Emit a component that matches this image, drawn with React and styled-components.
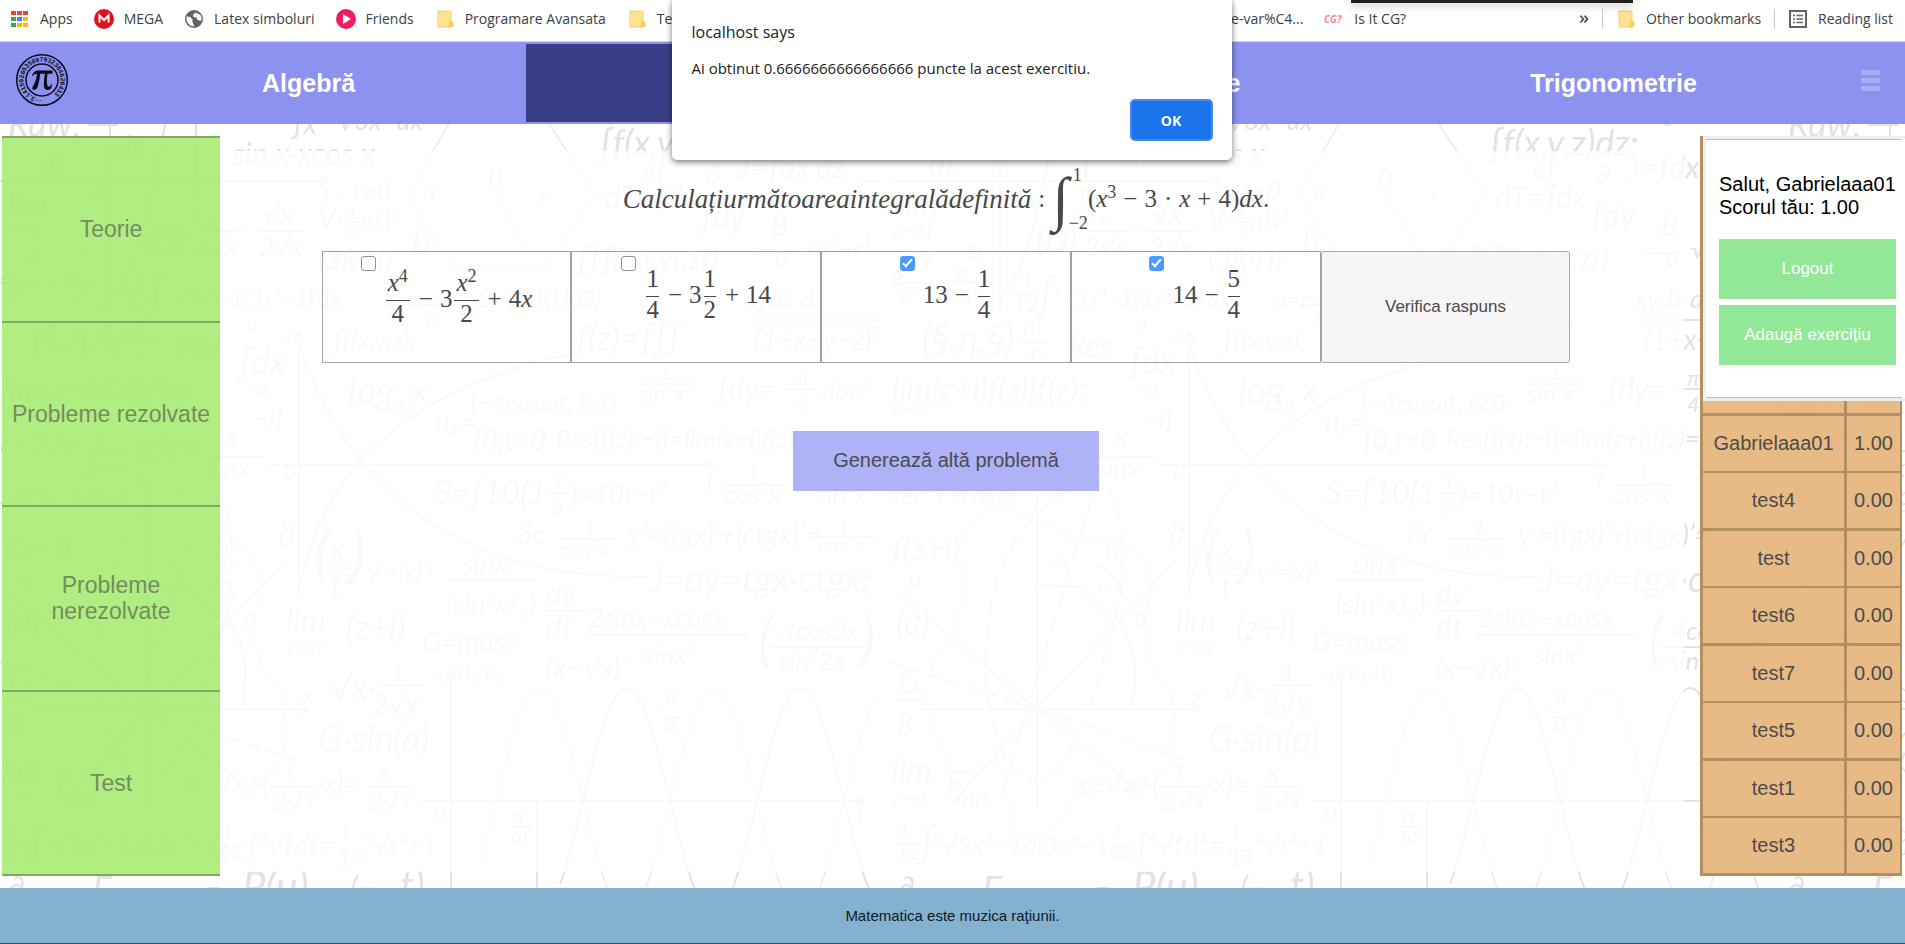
import React from 'react';
import styled, { createGlobalStyle } from 'styled-components';

const GlobalStyle = createGlobalStyle`
  *, *::before, *::after { box-sizing: border-box; }
  html, body { margin: 0; padding: 0; background: #fff; }
  body { font-family: "Liberation Sans", Arial, sans-serif; color: #000; }
  button { font-family: inherit; cursor: pointer; }
`;

const Page = styled.div`
  position: relative;
  display: flex;
  flex-direction: column;
  min-height: 100vh;
`;

/* ---------- bookmarks bar ---------- */

const BookmarkBar = styled.nav`
  display: flex;
  align-items: center;
  justify-content: space-between;
  height: 42px;
  padding: 0 12px 4px 10px;
  border-bottom: 1px solid #d9dadd;
  background: #fff;
  font-family: "Open Sans", "Noto Sans", sans-serif;
  font-size: 14px;
  line-height: 20px;
  white-space: nowrap;
`;

const BookmarkGroup = styled.div`
  display: flex;
  align-items: center;
  gap: ${(p) => p.$gap || 21}px;
`;

const Bookmark = styled.a`
  display: flex;
  align-items: center;
  gap: 10px;
  color: #3c4043;
  text-decoration: none;
  svg { display: block; width: 20px; height: 20px; }
`;

const Overflow = styled.button`
  width: 170px;
  padding: 0 0 4px;
  border: 0;
  background: none;
  color: #4d5156;
  font-family: "Open Sans", sans-serif;
  font-size: 18px;
  font-weight: 600;
  line-height: 20px;
  text-align: right;
`;

const Separator = styled.span`
  width: 1px;
  height: 20px;
  background: #c6c8cb;
`;

const TabStrip = styled.div`
  position: absolute;
  top: 0;
  right: 272px;
  width: 282px;
  height: 3px;
  background: #202124;
  box-shadow: 0 2px 8px rgba(0, 0, 0, 0.4);
`;

const FolderIcon = () => (
  <svg viewBox="0 0 20 20" aria-hidden="true">
    <path d="M3 2h13v11h2v4l-2 1H3z" fill="#fde293" stroke="#f3cf5e" />
    <path d="M14 18v-4q0-1 1-1h2v4q0 1-1 1z" fill="#fbd65b" stroke="#eec44a" strokeWidth=".7" />
  </svg>
);

const AppsIcon = () => (
  <svg viewBox="0 0 20 20" aria-hidden="true">
    {['#ea4335', '#ea4335', '#ea4335', '#34a853', '#4285f4', '#fbbc04', '#34a853', '#fbbc04', '#fbbc04'].map((c, i) => (
      <rect key={i} x={1 + (i % 3) * 6} y={2 + Math.floor(i / 3) * 6} width="5" height="4" fill={c} />
    ))}
  </svg>
);

const MegaIcon = () => (
  <svg viewBox="0 0 20 20" aria-hidden="true">
    <circle cx="10" cy="10" r="10" fill="#e01020" />
    <path d="M5.500 13.500v-7l4.500 4.500 4.500-4.500v7" fill="none" stroke="#fff" strokeWidth="2" />
  </svg>
);

const GlobeIcon = () => (
  <svg viewBox="0 0 20 20" aria-hidden="true">
    <circle cx="10" cy="10" r="9" fill="#5f6368" />
    <path d="M2.500 7.500l4 .5 2 2.500v2.500l2 4.500c-4 0-8-3.500-8-7.500zM12 3.500l-3 2 .5 2.500 3 .5 1 2.500 3.500 1c1-2 1-4-.5-6z" fill="#fff" />
  </svg>
);

const PlayIcon = () => (
  <svg viewBox="0 0 20 20" aria-hidden="true">
    <circle cx="10" cy="10" r="10" fill="#ee1c64" />
    <path d="M7 5l8 5-8 5z" fill="#fff" />
  </svg>
);

const CgIcon = () => (
  <svg viewBox="0 0 20 20" aria-hidden="true">
    <text x="0" y="14" fontFamily="Open Sans" fontSize="10" fontStyle="italic" fontWeight="700" fill="#ee8a90">CG?</text>
  </svg>
);

const ReadingIcon = () => (
  <svg viewBox="0 0 20 20" aria-hidden="true">
    <rect x="2" y="2" width="16" height="16" fill="none" stroke="#5f6368" strokeWidth="2" />
    <path d="M5 6.500h2M5 10h2M5 13.500h2M8.500 6.500h6.500M8.500 10h6.500M8.500 13.500h6.500" stroke="#5f6368" strokeWidth="1.600" />
  </svg>
);

/* ---------- site navigation ---------- */

const TopNav = styled.nav`
  display: grid;
  grid-template-columns: 91px repeat(4, 1fr) 74px;
  height: 82px;
  padding: 2px 0;
  background: #8c92f0;
`;

const LogoLink = styled.a`
  display: flex;
  align-items: center;
  padding: 0 0 6px 15px;
  svg { width: 54px; height: 54px; }
`;

const Topic = styled.a`
  display: flex;
  align-items: center;
  justify-content: center;
  background: ${(p) => (p.$active ? '#393d85' : 'transparent')};
  color: #fff;
  font-size: 25px;
  font-weight: 700;
  text-decoration: none;
`;

const MenuButton = styled.button`
  display: flex;
  flex-direction: column;
  justify-content: center;
  gap: 3px;
  padding: 0 0 6px 30px;
  border: 0;
  background: none;
`;

const MenuLine = styled.span`
  width: 19px;
  height: 5px;
  background: #a9adf4;
`;

const PiLogo = () => (
  <svg viewBox="0 0 54 54" role="img" aria-label="Pi">
    <defs>
      <path id="ring" d="M27 45.500a18.500 18.500 0 1 1 .1 0" />
    </defs>
    <circle cx="27" cy="27" r="25.300" fill="none" stroke="#0b0b18" strokeWidth="1.500" />
    <circle cx="27" cy="27" r="16" fill="none" stroke="#0b0b18" strokeWidth="1.500" />
    <text fontFamily="Liberation Sans" fontSize="6.500" fontWeight="700" fill="#0b0b18">
      <textPath href="#ring">···3.1415926535897932384626433</textPath>
    </text>
    <path d="M17 23q1.500-5.500 6-5.500h14.500v3.200h-5q-1 6-.5 10 .4 3 2 3 1.500 0 2-2.500h1q0 5.800-4.200 5.800-4 0-4-5.300 0-4 1-11h-4.600q-.6 8-2.500 13-1.500 3.600-3.700 3.300-2.500-.6-1.500-3 3.500-5 4.500-13.300-3-.2-4 2.300z" fill="#0b0b18" />
  </svg>
);

/* ---------- board with the formula wallpaper ---------- */

const Board = styled.div`
  position: relative;
  flex: 1;
  display: grid;
  grid-template-columns: 218px 1fr 205px;
  column-gap: 16px;
  padding: 12px 0 12px 2px;
`;

const WallpaperSvg = styled.svg`
  position: absolute;
  inset: 0;
  width: 100%;
  height: 100%;
  pointer-events: none;
  font-family: Lato, "DejaVu Sans", sans-serif;
  font-style: italic;
  fill: #e2e2e2;
`;

const notes = [
  [8, 137, 36, 'Raw;'], [38, 176, 32, 'dt'], [115, 159, 32, 'dt'], [292, 134, 28, '∫x'], [338, 130, 26, '√3x−ux'],
  [232, 165, 31, 'sin x·xcos x'], [598, 156, 36, '∫f(x,y,z)dz;'], [744, 126, 24, '→ s'],
  [8, 215, 32, 'lim'], [2, 238, 24, 'z→i'], [92, 202, 20, '0'], [190, 200, 20, 'π'], [190, 220, 20, 'w'],
  [12, 264, 20, '−3z'], [0, 287, 28, 'e'], [76, 260, 20, '3i'], [65, 281, 26, 'e'], [47, 288, 20, '='],
  [8, 304, 24, 'z²'], [62, 306, 24, '−i²₋₄'], [146, 252, 34, '(D)'], [207, 227, 24, 'x'], [194, 256, 26, '2√x'],
  [240, 236, 22, '−'], [262, 224, 28, '√x'], [259, 256, 26, '2√x'], [323, 204, 24, 't'], [340, 200, 26, ', t≥0'],
  [318, 229, 28, 'V·'], [347, 219, 16, '1'], [346, 238, 16, '3'], [360, 229, 24, 'πH³'], [318, 270, 28, '(3R·H)'],
  [130, 287, 22, '1'], [122, 312, 24, '12'], [147, 309, 42, '∫'], [163, 307, 23, '⁶√3x⁴−1(3x⁴−1)’dx'],
  [488, 187, 26, '0'], [540, 203, 24, 'r'], [423, 200, 24, 'a'], [412, 256, 34, 'b'],
  [643, 180, 26, 'в∫'], [706, 184, 26, '∂'], [738, 178, 30, 'J=∫dx dz'], [605, 208, 30, 'dT=∫dx'], [700, 228, 32, '∫dy'],
  [771, 236, 28, 'В'], [775, 266, 28, 'a'], [748, 256, 24, '−'],
  [800, 258, 26, '√a³−r¹'], [576, 270, 30, '∫∫∫f(xr,yr,zr)'], [384, 308, 24, 'a=π−2'], [425, 326, 24, 'π'],
  [478, 308, 26, 'S=2πRH(D)'], [745, 308, 26, 'xydz dx'], [577, 350, 34, 'f(z)=∫∫∫'], [754, 350, 28, '(1+x+y−z)²'],
  [332, 350, 26, '∫f(x,y,z);'], [32, 352, 38, '(§,η,§)'], [110, 350, 24, '='], [133, 335, 24, 'n!'],
  [140, 360, 22, 'r ,'], [179, 357, 30, 'Res'], [247, 330, 20, 'a'], [238, 374, 34, '∫dx'], [282, 346, 18, '4'],
  [2, 401, 32, 'lim(z+i)f(z)[f(z);'], [244, 396, 22, '−a'], [254, 428, 26, '−i]'], [2, 416, 20, 'z→i'],
  [348, 404, 38, 'log'], [394, 412, 22, 'a'], [412, 402, 32, 'x'], [435, 432, 28, 'u₂='], [470, 412, 25, '{−4cosωt, t≥0'],
  [474, 450, 28, '{0,t<0'], [556, 448, 26, 'Res[f(z);−i]=lim(z+i)f(z)='], [660, 380, 20, '1'], [638, 402, 24, 'sin²x'],
  [716, 400, 30, '∫dy='], [797, 386, 22, 'π'], [797, 412, 22, '4'], [822, 400, 26, 'abc²'],
  [0, 456, 28, 'c−2√x·'], [94, 447, 24, 'x'], [82, 477, 26, '2√x'], [136, 460, 32, '(z)y='], [225, 446, 26, 'x'],
  [207, 478, 26, 'sinx'], [283, 480, 22, '0'], [0, 505, 26, 'sec²x−cosec'], [133, 485, 22, 'y'],
  [435, 504, 32, 'S=∫10(1−'], [553, 490, 20, 'T'], [552, 514, 20, '5'], [570, 504, 27, ')=10t−t²'], [706, 490, 24, 't'],
  [747, 478, 22, '1'], [724, 504, 26, 'cos²x'], [838, 478, 22, '1'], [816, 504, 26, 'sin²x'],
  [2, 560, 33, 'f(z+i)'], [18, 588, 26, 'u'], [6, 634, 34, '(a)'], [277, 546, 32, 'ϑ'], [314, 575, 60, '('], [331, 560, 28, 'x'],
  [331, 598, 30, 't²'], [350, 575, 60, ')'], [368, 580, 24, 'y’=(x)’·'], [462, 574, 28, 'sinx'], [446, 614, 28, '(sin²x/₂)'],
  [518, 545, 28, 'δc'], [583, 535, 22, '1'], [558, 558, 24, 'cos²x'], [628, 545, 28, 'y’=(tgx)’+(ctgx)’='], [838, 533, 20, '1'],
  [818, 553, 22, 'cos²x'], [650, 592, 36, 'J=ay=tgx·ctgx;'], [546, 605, 30, 'dv'], [546, 638, 30, 'dt'],
  [588, 628, 27, '2sinx−xcosx'], [644, 664, 26, 'sinx²'], [546, 678, 28, '(x−√x)²'], [758, 660, 60, '('], [781, 640, 26, '4cos2x'],
  [779, 670, 26, 'sin²2x'], [860, 660, 60, ')'], [286, 632, 32, 'lim'], [286, 655, 22, 'z→i'], [346, 640, 34, '(z+i)'],
  [422, 652, 28, 'G=mass'], [433, 684, 20, '4'], [458, 680, 24, 'u₁,u₂'], [302, 704, 24, 'x'], [330, 700, 34, '√x·'],
  [391, 681, 24, '1'], [372, 715, 28, '2√x'], [318, 752, 36, 'G·sin(a)'], [8, 693, 34, 'G'], [8, 730, 34, 'g'],
  [244, 628, 22, 'θ'], [163, 566, 20, 'x₁'], [215, 560, 20, 'N°'], [205, 592, 18, 'x₂'], [186, 794, 28, 'x−√x+('],
  [283, 780, 22, '1'], [272, 810, 26, '2√x'], [316, 794, 28, '·x)='], [378, 780, 24, 'x'], [368, 810, 26, '2√x'],
  [2, 782, 32, 'lim'], [2, 805, 20, 'z→i'], [56, 796, 34, 'F'], [66, 806, 24, 'mp'], [8, 838, 20, '1'], [6, 860, 24, '12'],
  [28, 858, 42, '∫'], [42, 855, 26, '⁶√3x⁴−1d(3x⁴−1)'], [222, 838, 18, '1'], [220, 858, 20, '12'], [246, 855, 28, '∫⁶√tdt='],
  [340, 840, 20, '1'], [338, 866, 22, '14'], [364, 855, 26, '⁶√t³+1'], [434, 822, 22, '0'], [512, 824, 22, 'π'],
  [511, 844, 24, 'ω'], [856, 824, 28, 't'], [666, 703, 24, 'в'], [664, 731, 26, 'a'], [652, 715, 20, '−'],
  [8, 898, 30, '∂'], [92, 904, 38, 'Γ'], [205, 900, 28, '='], [242, 902, 42, 'P(u)'], [350, 900, 32, '(−'], [400, 900, 40, 't)'],
];

const fractionBars = [
  'M34 141h51', 'M88 125h30', 'M0 283h45', 'M62 282h38', 'M187 200h22', 'M195 231h43', 'M257 231h48', 'M346 222h14',
  'M122 294h22', 'M410 305h40', 'M757 253h32', 'M750 320h134', 'M129 342h30', 'M85 451h47', 'M207 457h58',
  'M636 384h62', 'M785 389h32', 'M724 485h60', 'M816 485h58', 'M548 493h24', 'M558 539h58', 'M818 537h58', 'M327 568h26',
  'M446 580h88', 'M545 611h44', 'M587 635h160', 'M770 647h96', 'M380 685h44', 'M8 700h22', 'M662 717h20', 'M268 787h46',
  'M368 787h44', 'M6 844h22', 'M338 850h22', 'M511 827h20', 'M220 848h18', 'M860 181h22',
];

const wave = (from, to, phase) => {
  let d = '';
  for (let x = from; x <= to; x += 4) {
    const y = 801 - 113 * Math.sin(((x - phase) * Math.PI) / 87);
    d += `${d ? 'L' : 'M'}${x} ${Math.round(y)}`;
  }
  return d;
};

const Wallpaper = () => (
  <WallpaperSvg aria-hidden="true">
    <defs>
      <pattern id="formulas" patternUnits="userSpaceOnUse" x="-8" y="-124" width="890" height="1030" viewBox="-8 0 890 1030">
        {notes.map(([x, y, size, text], i) => (
          <text key={i} x={x} y={y} fontSize={size}>{text}</text>
        ))}
        <g fill="none" stroke="#e2e2e2" strokeWidth="2">
          <path d={fractionBars.join('')} />
          <path d="M0 181h328M320 177l9 4-9 4M110 124v188M196 124v56M165 124Q140 270 112 296" />
          <path d="M449 124L408 194L454 269H546L595 194L549 124M494 190L530 255" opacity=".6" />
          <path d="M299 330v265M294 342l5-12 5 12M268 465h440M704 460l10 5-10 5" />
          <path d="M299 345Q380 580 650 577M301 580Q340 400 580 352" />
          <path d="M147 475v335M30 709h280M300 704l10 5-10 5M147 709L286 560M147 709L7 592M147 709L62 803M147 709L256 796M147 585l42 2 38 40" />
          <path d="M0 662L147 709L305 763" strokeDasharray="14 6" />
          <path d="M183 490Q92 530 96 680Q110 800 160 775Q190 760 230 600Q240 480 200 480M201 500L110 800" strokeDasharray="16 8" />
          <path d="M69 550Q80 500 130 512Q160 520 190 545Q250 520 262 590Q240 650 280 690Q300 770 250 790Q190 790 180 800Q160 850 120 830Q120 790 105 755Q80 785 60 765Q20 700 50 650Q80 620 69 550z" opacity=".6" />
          <path d="M224 615Q254 650 242 706M205 565Q225 570 235 600" />
          <path d="M451 668v240M446 682l5-12 5 12M420 801h444M856 796l9 5-9 5M537 801v110" />
          <path d={wave(480, 876, 496)} opacity=".6" />
          <path d={wave(560, 876, 583)} />
        </g>
      </pattern>
    </defs>
    <rect width="100%" height="100%" fill="url(#formulas)" />
  </WallpaperSvg>
);

/* ---------- left menu ---------- */

const SideMenu = styled.nav`
  position: relative;
  display: grid;
  grid-auto-rows: 1fr;
  border-bottom: 2px solid #80a861;
`;

const SideLink = styled.a`
  display: flex;
  align-items: center;
  justify-content: center;
  padding: 0 8px;
  border-top: 2px solid #80a861;
  background: rgba(168, 236, 115, 0.9);
  color: #738d5e;
  font-size: 23px;
  line-height: 26px;
  text-align: center;
  text-decoration: none;
`;

/* ---------- exercise ---------- */

const Exercise = styled.main`
  position: relative;
  display: flex;
  flex-direction: column;
  align-items: center;
  margin: 15px 0 4px -16px;
  padding: 14px 12px 0 0;
  background: rgba(255, 255, 255, 0.78);
  color: #484848;
`;

const Question = styled.h1`
  display: flex;
  align-items: center;
  height: 68px;
  margin: 0;
  font-family: "Liberation Serif", "Times New Roman", serif;
  font-size: 25px;
  font-weight: 400;
  line-height: 30px;
  white-space: nowrap;
`;

const Words = styled.i`
  font-size: 27px;
`;

const IntegralSign = styled.span`
  font-size: 60px;
  line-height: 60px;
`;

const Bounds = styled.span`
  display: flex;
  flex-direction: column;
  justify-content: space-between;
  height: 68px;
  font-size: 18px;
  line-height: 20px;
  span:first-child { padding-left: 4px; }
`;

const Expression = styled.span`
  sup { font-size: 18px; line-height: 0; }
`;

const Options = styled.form`
  display: grid;
  grid-template-columns: repeat(5, 1fr);
  width: 86%;
  height: 112px;
  margin-top: 18px;
`;

const Option = styled.label`
  display: flex;
  justify-content: center;
  align-items: flex-start;
  gap: 8px;
  padding-top: 4px;
  border: 1px solid #a3a3a3;
`;

const Check = styled.input`
  appearance: none;
  flex: none;
  display: block;
  width: 15px;
  height: 15px;
  margin: 0;
  border: 1px solid #919191;
  border-radius: 3px;
  background: #fff;
  &:checked {
    border-color: #4a9aff;
    background: #4a9aff;
  }
  &:checked::after {
    content: "";
    display: block;
    width: 5px;
    height: 10px;
    margin: 0 auto;
    border: solid #fff;
    border-width: 0 2px 2px 0;
    transform: rotate(42deg);
  }
`;

const Formula = styled.span`
  display: flex;
  align-items: flex-end;
  margin-top: 10px;
  font-family: "Liberation Serif", "Times New Roman", serif;
  font-size: 25px;
  line-height: 26px;
  sup { font-size: 18px; line-height: 0; }
`;

const Term = styled.span`
  margin-bottom: 15px;
`;

const Operator = styled.span`
  margin: 0 7px;
`;

const Fraction = styled.span`
  display: flex;
  flex-direction: column;
  margin: 0 2px;
  text-align: center;
`;

const Numerator = styled.span`
  padding: ${(p) => (p.$tall ? '4px 2px' : '0 0 4px')};
  border-bottom: 1px solid #484848;
`;

const Frac = ({ tall, top, bottom }) => (
  <Fraction>
    <Numerator $tall={tall}>{top}</Numerator>
    <span>{bottom}</span>
  </Fraction>
);

const VerifyButton = styled.button`
  border: 1px solid #a8a8a8;
  border-radius: 3px;
  background: rgba(244, 244, 244, 0.8);
  color: #4a4a4a;
  font-size: 17px;
`;

const GenerateButton = styled.button`
  width: 306px;
  height: 60px;
  margin-top: 68px;
  padding-bottom: 3px;
  border: 0;
  background: rgba(168, 172, 245, 0.93);
  color: #4b4b50;
  font-size: 20px;
`;

/* ---------- account and ranking ---------- */

const RightColumn = styled.aside`
  position: relative;
  border-left: 3px solid #b28f61;
`;

const Account = styled.section`
  height: 265px;
  border: 3px solid #eee;
  border-right: 0;
  background: #fff;
`;

const AccountBody = styled.div`
  height: 100%;
  padding: 33px 6px 0 13px;
  margin-right: 3px;
  border: solid #e2b98a;
  border-width: 1px 0;
  font-size: 20px;
  line-height: 23px;
  white-space: nowrap;
`;

const Greeting = styled.p`
  margin: 0 0 20px;
`;

const AccountButton = styled.button`
  display: block;
  width: 100%;
  height: 60px;
  margin-bottom: 6px;
  border: 0;
  background: #92e896;
  color: #fff;
  font-size: 17px;
`;

const Ranking = styled.table`
  width: calc(100% - 3px);
  border-collapse: separate;
  border-spacing: 0;
  background: rgba(230, 180, 122, 0.91);
  color: #4d4b4a;
  font-size: 20px;
  text-align: center;
`;

const RankRow = styled.tr`
  height: 58px;
  td {
    padding: 0;
    border: solid #b28f61;
    border-width: 0 3px 3px 0;
  }
  td:last-child { width: 55px; border-right-width: 2px; }
  &:nth-child(odd) { height: 57px; }
  &:nth-child(odd) td { border-bottom-width: 2px; }
`;

const RankHead = styled.tr`
  height: 15px;
  th {
    padding: 0;
    border: solid #b28f61;
    border-width: 0 3px 3px 0;
  }
  th:last-child { border-right-width: 2px; }
`;

/* ---------- footer and dialog ---------- */

const Footer = styled.footer`
  display: flex;
  align-items: center;
  justify-content: center;
  height: 56px;
  border-bottom: 1px solid #3c4b55;
  background: #84b1cf;
  color: #0c1a24;
  font-size: 15px;
`;

const Dialog = styled.div`
  position: absolute;
  top: 0;
  left: 50%;
  width: 560px;
  height: 160px;
  margin-left: -281px;
  padding: 20px 19px 19px 20px;
  border-radius: 0 0 5px 5px;
  background: #fff;
  box-shadow: 0 2px 6px rgba(0, 0, 0, 0.55);
  color: #202124;
  font-family: "Open Sans", "Noto Sans", sans-serif;
  font-size: 15px;
  line-height: 22px;
`;

const DialogTitle = styled.h2`
  margin: 0 0 12px;
  font-size: 16px;
  font-weight: 400;
  line-height: 25px;
`;

const DialogText = styled.p`
  margin: 0 0 20px;
`;

const OkButton = styled.button`
  display: block;
  width: 83px;
  height: 42px;
  margin-left: auto;
  padding: 0;
  border: 2px solid #4388f5;
  border-radius: 5px;
  background: #1a73e8;
  color: #fff;
  font-size: 14px;
  font-weight: 700;
`;

const ranking = [
  ['Gabrielaaa01', '1.00'], ['test4', '0.00'], ['test', '0.00'], ['test6', '0.00'],
  ['test7', '0.00'], ['test5', '0.00'], ['test1', '0.00'], ['test3', '0.00'],
];

export default function App() {
  return (
    <Page>
      <GlobalStyle />
      <BookmarkBar>
        <BookmarkGroup>
          <Bookmark href="#apps"><AppsIcon />Apps</Bookmark>
          <Bookmark href="#mega"><MegaIcon />MEGA</Bookmark>
          <Bookmark href="#latex"><GlobeIcon />Latex simboluri</Bookmark>
          <Bookmark href="#friends"><PlayIcon />Friends</Bookmark>
          <Bookmark href="#pa"><FolderIcon />Programare Avansata</Bookmark>
          <Bookmark href="#tel"><FolderIcon />Tel</Bookmark>
        </BookmarkGroup>
        <BookmarkGroup $gap="13">
          <BookmarkGroup>
            <Bookmark href="#var">e-var%C4...</Bookmark>
            <Bookmark href="#cg"><CgIcon />Is It CG?</Bookmark>
          </BookmarkGroup>
          <Overflow type="button">»</Overflow>
          <Separator />
          <Bookmark href="#other"><FolderIcon />Other bookmarks</Bookmark>
          <Separator />
          <Bookmark href="#reading"><ReadingIcon />Reading list</Bookmark>
        </BookmarkGroup>
      </BookmarkBar>
      <TabStrip />

      <TopNav>
        <LogoLink href="#home"><PiLogo /></LogoLink>
        <Topic href="#algebra">Algebră</Topic>
        <Topic href="#analiza" $active />
        <Topic href="#geometrie">Geometrie</Topic>
        <Topic href="#trigonometrie">Trigonometrie</Topic>
        <MenuButton type="button" aria-label="Meniu">
          <MenuLine /><MenuLine /><MenuLine />
        </MenuButton>
      </TopNav>

      <Board>
        <Wallpaper />
        <SideMenu>
          <SideLink href="#teorie">Teorie</SideLink>
          <SideLink href="#rezolvate">Probleme rezolvate</SideLink>
          <SideLink href="#nerezolvate">Probleme nerezolvate</SideLink>
          <SideLink href="#test">Test</SideLink>
        </SideMenu>

        <Exercise>
          <Question>
            <Words>Calculațiurmătoareaintegralădefinită</Words>
            <Operator>:</Operator>
            <IntegralSign>∫</IntegralSign>
            <Bounds><span>1</span><span>−2</span></Bounds>
            <Expression>
              (<i>x</i><sup>3</sup><Operator>−</Operator>3<Operator>·</Operator><i>x</i>
              <Operator>+</Operator>4)<i>dx</i>.
            </Expression>
          </Question>

          <Options>
            <Option>
              <Check type="checkbox" />
              <Formula>
                <Frac tall top={<><i>x</i><sup>4</sup></>} bottom="4" />
                <Term><Operator>−</Operator>3</Term>
                <Frac tall top={<><i>x</i><sup>2</sup></>} bottom="2" />
                <Term><Operator>+</Operator>4<i>x</i></Term>
              </Formula>
            </Option>
            <Option>
              <Check type="checkbox" />
              <Formula>
                <Frac top="1" bottom="4" />
                <Term><Operator>−</Operator>3</Term>
                <Frac top="1" bottom="2" />
                <Term><Operator>+</Operator>14</Term>
              </Formula>
            </Option>
            <Option>
              <Check type="checkbox" defaultChecked />
              <Formula>
                <Term>13<Operator>−</Operator></Term>
                <Frac top="1" bottom="4" />
              </Formula>
            </Option>
            <Option>
              <Check type="checkbox" defaultChecked />
              <Formula>
                <Term>14<Operator>−</Operator></Term>
                <Frac top="5" bottom="4" />
              </Formula>
            </Option>
            <VerifyButton type="button">Verifica raspuns</VerifyButton>
          </Options>

          <GenerateButton type="button">Generează altă problemă</GenerateButton>
        </Exercise>

        <RightColumn>
          <Account>
            <AccountBody>
              <Greeting>Salut, Gabrielaaa01<br />Scorul tău: 1.00</Greeting>
              <AccountButton type="button">Logout</AccountButton>
              <AccountButton type="button">Adaugă exercițiu</AccountButton>
            </AccountBody>
          </Account>
          <Ranking>
            <thead>
              <RankHead><th /><th /></RankHead>
            </thead>
            <tbody>
              {ranking.map(([name, score]) => (
                <RankRow key={name}><td>{name}</td><td>{score}</td></RankRow>
              ))}
            </tbody>
          </Ranking>
        </RightColumn>
      </Board>

      <Footer>Matematica este muzica raţiunii.</Footer>

      <Dialog role="alertdialog" aria-labelledby="dialog-title">
        <DialogTitle id="dialog-title">localhost says</DialogTitle>
        <DialogText>Ai obtinut 0.6666666666666666 puncte la acest exercitiu.</DialogText>
        <OkButton type="button">OK</OkButton>
      </Dialog>
    </Page>
  );
}
